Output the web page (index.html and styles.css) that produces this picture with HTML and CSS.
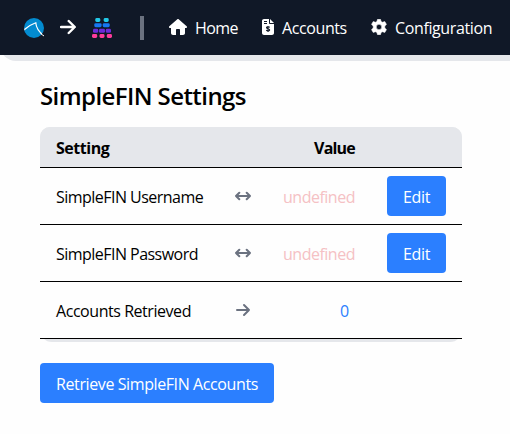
FILE: index.html
```html
<!DOCTYPE html>
<html lang="en">
<head>
<meta charset="utf-8">
<title>SimpleFIN Settings</title>
<link rel="stylesheet" href="styles.css">
</head>
<body>
<header class="shell">
<nav class="nav">
  <svg class="logo" viewBox="0 0 20 20"><defs><clipPath id="disc"><circle cx="10" cy="10" r="10"/></clipPath></defs><circle cx="10" cy="10" r="10" fill="#038bd0"/><path clip-path="url(#disc)" d="M-.5 12.3Q5 7 11.8 4.700Q12.200 12 20 17.700" fill="none" stroke="#fff" stroke-width="1.200"/><path d="M16.500 15.500L20 18" stroke="#fff"/></svg>
  <svg class="to" viewBox="0 0 16 16"><path d="M1 8H14.500M8.700 2L14.800 8L8.700 14" fill="none" stroke="#fff" stroke-width="2.400" stroke-linecap="round" stroke-linejoin="round"/></svg>
  <svg class="budget" viewBox="0 0 20 20">
    <g fill="#22c8e8"><rect x="3.300" width="5" height="4" rx="1.400"/><rect x="11.700" width="5" height="4" rx="1.400"/></g>
    <g fill="#1677f2"><rect x="2.300" y="5.200" width="7.300" height="4" rx="1.400"/><rect x="10.700" y="5.200" width="7" height="4" rx="1.400"/></g>
    <g fill="#6c2bd9"><rect x="1" y="10.800" width="5.200" height="4" rx="1.400"/><rect x="7" y="10.800" width="6" height="4" rx="1.400"/><rect x="13.800" y="10.800" width="5.200" height="4" rx="1.400"/></g>
    <g fill="#ff3d9a"><rect y="16" width="5.200" height="4" rx="1.400"/><rect x="7.500" y="16" width="5" height="4" rx="1.400"/><rect x="14.800" y="16" width="5.200" height="4" rx="1.400"/></g>
  </svg>
  <span class="divider"></span>
  <a class="link home"><svg viewBox="0 0 576 512" width="18" height="16"><path fill="#fff" d="M575.8 255.5c0 18-15 32.1-32 32.1h-32l.7 160.2c0 35.4-28 64.2-64 64.2H352V352c0-17.7-14.3-32-32-32h-64c-17.7 0-32 14.300-32 32v160h-96c-35 0-64-28-64-64V287.600H32c-18 0-32-14-32-32.100 0-9 3-17 10-24L266.400 8c7-7 15-8 22-8s15 2 21 7l255.400 224.500c8 7 12 15 11 24z"/></svg><span>Home</span></a>
  <a class="link accounts"><svg viewBox="0 0 384 512" width="12" height="16"><path fill="#fff" fill-rule="evenodd" d="M64 0h160v128c0 18 14 32 32 32h128v288c0 35-29 64-64 64H64c-35 0-64-29-64-64V64C0 29 29 0 64 0zM256 0v128h128zM64 64v32h96V64zm0 64v32h96v-32z"/><path d="M252 262c-35-15-101-22-109 12-9 48 104 24 103 75-2 41-72 37-113 14M192 224v192" fill="none" stroke="#101827" stroke-width="36"/></svg><span>Accounts</span></a>
  <a class="link config"><svg viewBox="0 0 16 16" width="16" height="16"><path fill="#fff" stroke="#fff" stroke-width=".5" stroke-linejoin="round" fill-rule="evenodd" d="M6.500 .3h3l.6 2.100 1.400.8 2.300-.7 1.700 2.900-1.700 1.600v2l1.700 1.600-1.700 2.900-2.300-.7-1.400.8-.6 2.100h-3l-.6-2.100-1.400-.8-2.300.7L.5 10.600 2.200 9V7L.5 5.400l1.700-2.900 2.300.7 1.400-.8zM8 5.300a2.700 2.700 0 100 5.400 2.700 2.700 0 000-5.400z"/></svg><span>Configuration</span></a>
</nav>
</header>
<main class="content">
  <h1><span>SimpleFIN Settings</span></h1>
  <div class="settings">
    <div class="row head"><b class="name">Setting</b><i></i><b class="value-title">Value</b><i></i></div>
    <div class="row"><span class="name user">SimpleFIN Username</span><svg class="arrow" viewBox="0 0 16 16"><path d="M1 8H15M4.300 4.700L1 8l3.300 3.300M11.700 4.700L15 8l-3.300 3.300"/></svg><span class="undefined">undefined</span><button class="edit">Edit</button></div>
    <div class="row"><span class="name pass">SimpleFIN Password</span><svg class="arrow" viewBox="0 0 16 16"><path d="M1 8H15M4.300 4.700L1 8l3.300 3.300M11.700 4.700L15 8l-3.300 3.300"/></svg><span class="undefined">undefined</span><button class="edit">Edit</button></div>
    <div class="row"><span class="name retrieved">Accounts Retrieved</span><svg class="arrow" viewBox="0 0 16 16"><path d="M2 8H14M9 3l5 5-5 5"/></svg><span class="count">0</span></div>
  </div>
  <button class="retrieve">Retrieve SimpleFIN Accounts</button>
</main>
</body>
</html>
```
FILE: styles.css
```css
* { box-sizing: border-box; }
body { margin: 0; background: #fefefe; color: #000; font: 16px/24px "Open Sans", "Noto Sans", sans-serif; overflow: hidden; }
.shell { height: 61px; background: #e5e7eb; border-bottom-left-radius: 16px; }
.nav { height: 55px; background: #101827; display: flex; align-items: center; color: #fff; padding-left: 24px; }
.nav svg { flex: none; display: block; }
.logo { width: 20px; height: 20px; overflow: visible; }
.to { width: 16px; height: 16px; margin: 0 16px; position: relative; top: -1px; }
.budget { width: 20px; height: 20px; }
.divider { width: 4px; height: 24px; background: #6b7280; margin: 0 25px 0 28px; }
.link { display: flex; align-items: center; gap: 8px; white-space: nowrap; }
.link svg { position: relative; top: -1px; }
.home { width: 93px; letter-spacing: -.6px; }
.accounts { width: 109px; letter-spacing: -.4px; }
.config { letter-spacing: -.38px; }
.content { padding: 17px 0 0 40px; }
h1 { font-size: 24px; line-height: 36px; font-weight: 600; letter-spacing: -.58px; margin: 0 0 13px; white-space: nowrap; }
.settings { width: 422px; height: 215px; padding-bottom: 3px; background: #e5e7eb; border-radius: 10px 10px 12px 12px; }
.row { display: grid; grid-template-columns: 187px 32px 120px 83px; align-items: center; height: 57px; background: #fefefe; border-bottom: 1px solid #000; white-space: nowrap; }
.head { height: 41px; background: #e5e7eb; border-radius: 10px 10px 0 0; letter-spacing: -.45px; padding-top: 2px; }
.name { padding-left: 16px; }
.user, .pass { letter-spacing: -.53px; padding-top: 2px; }
.retrieved { letter-spacing: -.45px; padding-top: 2px; }
.value-title { text-align: right; padding-right: 24px; letter-spacing: -.8px; }
.arrow { width: 16px; height: 16px; justify-self: center; fill: none; stroke: #6b7280; stroke-width: 2; stroke-linecap: round; stroke-linejoin: round; }
.undefined { text-align: center; color: #f5c1c4; letter-spacing: -.5px; padding-top: 2px; }
.count { grid-column: 3 / 5; text-align: center; color: #2b80ff; padding-top: 2px; margin-left: -32px; }
button { font: inherit; border: 0; background: #2b7fff; color: #fff; border-radius: 4px; height: 40px; padding: 2px 0 0; white-space: nowrap; }
.edit { width: 59px; margin-left: 8px; letter-spacing: -.3px; }
.retrieve { display: block; width: 234px; margin-top: 21px; letter-spacing: -.4px; }
```
